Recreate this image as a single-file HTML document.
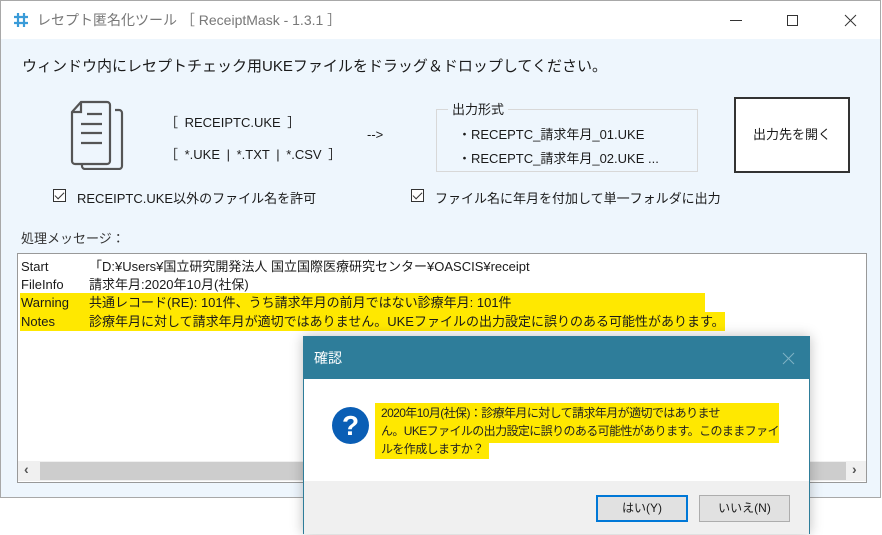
<!DOCTYPE html>
<html><head><meta charset="utf-8"><style>
*{margin:0;padding:0;box-sizing:border-box}
body{width:882px;height:535px;background:#fff;position:relative;overflow:hidden;font-family:"Liberation Sans","Noto Sans CJK JP",sans-serif;color:#1a1a1a}
.abs{position:absolute;white-space:nowrap}
#win{position:absolute;left:0;top:0;width:881px;height:498px;border:1px solid #a8a8a8;background:#eef6fd}
#tb{position:absolute;left:0;top:0;width:879px;height:38px;background:#fff}
.t13{font-size:13px}
.hl{background:#ffe800}
.cb{position:absolute;width:13px;height:13px;border:1px solid #333;background:#fff}
.cb:after{content:"";position:absolute;left:3px;top:0px;width:4px;height:8px;border:solid #333;border-width:0 1.5px 1.5px 0;transform:rotate(45deg)}
</style></head><body>
<div id="win">
 <div id="tb">
  <svg class="abs" style="left:11px;top:10px" width="18" height="18" viewBox="0 0 18 18"><g stroke="#3a9bd8" stroke-width="2.2" fill="none"><path d="M6 2v14M12 2v14M2 6h14M2 12h14"/></g></svg>
  <div class="abs" style="left:36px;top:9px;font-size:14px;color:#777">レセプト匿名化ツール ［ ReceiptMask - 1.3.1 ］</div>
  <div class="abs" style="left:729px;top:19px;width:12px;height:1px;background:#333"></div>
  <div class="abs" style="left:786px;top:14px;width:11px;height:11px;border:1px solid #333"></div>
  <svg class="abs" style="left:843px;top:13px" width="13" height="13"><path d="M1 1L12 12M12 1L1 12" stroke="#333" stroke-width="1"/></svg>
 </div>
 <div class="abs" style="left:21px;top:54px;font-size:15px">ウィンドウ内にレセプトチェック用UKEファイルをドラッグ＆ドロップしてください。</div>
 <svg class="abs" style="left:68px;top:97px" width="62" height="72" viewBox="0 0 62 72"><g fill="none" stroke="#555" stroke-width="2.2"><path d="M12 4h26a3 3 0 0 1 3 3v56a3 3 0 0 1-3 3H6a3 3 0 0 1-3-3V14z"/><path d="M12 4v10H3"/><path d="M46 12h4a3 3 0 0 1 3 3v53a3 3 0 0 1-3 3H16a3 3 0 0 1-3-3v-1"/><path d="M18 16h15M12 26h21M12 35h21M12 45h21"/></g></svg>
 <div class="abs t13" style="left:164px;top:111px;word-spacing:3px">［ RECEIPTC.UKE ］</div>
 <div class="abs t13" style="left:164px;top:143px;word-spacing:3px">［ *.UKE | *.TXT | *.CSV ］</div>
 <div class="abs t13" style="left:366px;top:126px">--&gt;</div>
 <div class="abs" style="left:435px;top:108px;width:262px;height:63px;border:1px solid #d8d8d8"></div>
 <div class="abs t13" style="left:447px;top:98px;background:#eef6fd;padding:0 4px">出力形式</div>
 <div class="abs t13" style="left:457px;top:123px">・RECEPTC_請求年月_01.UKE</div>
 <div class="abs t13" style="left:457px;top:147px">・RECEPTC_請求年月_02.UKE ...</div>
 <div class="abs" style="left:733px;top:96px;width:116px;height:76px;border:2px solid #333;background:#fff;font-size:13px;text-align:center;line-height:72px">出力先を開く</div>
 <div class="cb" style="left:52px;top:188px"></div>
 <div class="abs t13" style="left:76px;top:187px">RECEIPTC.UKE以外のファイル名を許可</div>
 <div class="cb" style="left:410px;top:188px"></div>
 <div class="abs t13" style="left:434px;top:187px">ファイル名に年月を付加して単一フォルダに出力</div>
 <div class="abs t13" style="left:20px;top:227px;color:#333">処理メッセージ：</div>
 <div class="abs" style="left:16px;top:252px;width:850px;height:230px;border:1px solid #999;background:#fff">
  <div class="abs t13" style="left:3px;top:3px;line-height:19px">Start</div>
  <div class="abs t13" style="left:71px;top:3px;line-height:19px">「D:¥Users¥国立研究開発法人 国立国際医療研究センター¥OASCIS¥receipt</div>
  <div class="abs t13" style="left:3px;top:21px;line-height:19px">FileInfo</div>
  <div class="abs t13" style="left:71px;top:21px;line-height:19px">請求年月:2020年10月(社保)</div>
  <div class="abs hl" style="left:2px;top:39px;width:685px;height:19px"></div>
  <div class="abs hl" style="left:2px;top:58px;width:705px;height:19px"></div>
  <div class="abs t13" style="left:3px;top:39px;line-height:19px">Warning</div>
  <div class="abs t13" style="left:71px;top:39px;line-height:19px">共通レコード(RE): 101件、うち請求年月の前月ではない診療年月: 101件</div>
  <div class="abs t13" style="left:3px;top:58px;line-height:19px">Notes</div>
  <div class="abs t13" style="left:71px;top:58px;line-height:19px">診療年月に対して請求年月が適切ではありません。UKEファイルの出力設定に誤りのある可能性があります。</div>
  <div class="abs" style="left:0;top:207px;width:848px;height:20px;background:#f0f0f0"></div>
  <div class="abs" style="left:22px;top:208px;width:806px;height:18px;background:#cdcdcd"></div>
  <div class="abs" style="left:6px;top:207px;font-size:14px;color:#555;font-weight:bold">‹</div>
  <div class="abs" style="left:834px;top:207px;font-size:14px;color:#555;font-weight:bold">›</div>
 </div>
</div>
<div class="abs" style="left:303px;top:336px;width:507px;height:198px;border:1px solid #2e7d9a;background:#fff;box-shadow:0 0 12px rgba(0,0,0,.25)">
 <div class="abs" style="left:0;top:0;width:505px;height:42px;background:#2e7d9a"></div>
 <div class="abs" style="left:10px;top:11px;font-size:14px;color:#fff">確認</div>
 <svg class="abs" style="left:478px;top:15px" width="13" height="13"><path d="M1 1L12 12M12 1L1 12" stroke="#7fb2c4" stroke-width="1"/></svg>
 <div class="abs" style="left:28px;top:70px;width:37px;height:37px;border-radius:50%;background:#0a5eb5;color:#fff;font-size:28px;text-align:center;line-height:37px;font-weight:bold">?</div>
 <div class="abs hl" style="left:71px;top:66px;width:404px;height:40px"></div>
 <div class="abs hl" style="left:71px;top:106px;width:114px;height:16px"></div>
 <div class="abs" style="left:77px;top:67px;font-size:12px;line-height:18px;color:#222;letter-spacing:-0.6px">2020年10月(社保)：診療年月に対して請求年月が適切ではありませ<br>ん。UKEファイルの出力設定に誤りのある可能性があります。このままファイ<br>ルを作成しますか？</div>
 <div class="abs" style="left:0;top:144px;width:505px;height:53px;background:#f0f0f0"></div>
 <div class="abs" style="left:292px;top:158px;width:92px;height:27px;border:2px solid #0078d7;background:#e1e1e1;font-size:12px;text-align:center;line-height:23px">はい(Y)</div>
 <div class="abs" style="left:395px;top:158px;width:91px;height:27px;border:1px solid #adadad;background:#e1e1e1;font-size:12px;text-align:center;line-height:25px">いいえ(N)</div>
</div>
</body></html>
